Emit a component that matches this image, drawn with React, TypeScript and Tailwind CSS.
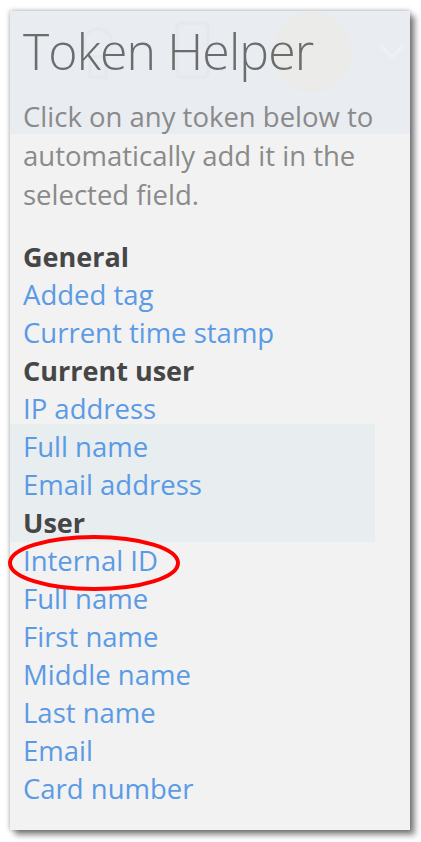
import React from "react";

const font = { fontFamily: '"Open Sans", "Noto Sans", sans-serif' };

function Link({ children }: { children: React.ReactNode }) {
  return <div className="h-[38px] leading-[38px] text-[27.5px] text-[#5b9ae4] whitespace-nowrap">{children}</div>;
}
function Head({ children }: { children: React.ReactNode }) {
  return <div className="h-[38px] leading-[38px] text-[27px] font-bold text-[#464646] whitespace-nowrap">{children}</div>;
}

export default function App() {
  return (
    <div className="w-[421px] h-[842px] bg-white pl-[10px] pt-[11px]" style={font}>
      <div className="relative w-[400px] h-[819px] bg-[linear-gradient(to_bottom,#e9edf1_123px,#f2f2f2_123px)] shadow-[0_0_5px_rgba(0,0,0,0.35),5px_5px_6px_rgba(0,0,0,0.45)]">
        {/* faint header ghost icons */}
        <svg className="absolute left-0 top-0" width="400" height="123" viewBox="0 0 400 123">
          <g opacity="0.4">
            <circle cx="302" cy="42" r="40" fill="#efe9df" />
            <rect x="167" y="12" width="31" height="54" rx="4" fill="none" stroke="#dfe4ea" strokeWidth="3" />
            <circle cx="88" cy="32" r="14" fill="none" stroke="#dfe4ea" strokeWidth="3" />
            <path d="M80 46 L80 66 L96 66 L96 46" fill="none" stroke="#dfe4ea" strokeWidth="3" />
            <path d="M371 35 L382 46 L393 35" fill="none" stroke="#f7f8fa" strokeWidth="3" />
          </g>
        </svg>
        <div className="relative px-[13px] pt-[8px]">
          <div className="text-[50px] font-light text-[#6c6c6c] leading-[64px] tracking-[-0.9px] whitespace-nowrap">Token Helper</div>
          <div className="mt-[14px] text-[27.5px] text-[#8a8a8a] leading-[39px] -mr-[4px]">
            Click on any token below to automatically add it in the selected field.
          </div>
          <div className="mt-[24px]">
            <Head>General</Head>
            <Link>Added tag</Link>
            <Link>Current time stamp</Link>
            <Head>Current user</Head>
            <Link>IP address</Link>
            <div className="-ml-[13px] pl-[13px] w-[365px] bg-[#e8edf0] -mt-[4px] pt-[4px]">
              <Link>Full name</Link>
              <Link>Email address</Link>
              <Head>User</Head>
            </div>
            <Link>Internal ID</Link>
            <Link>Full name</Link>
            <Link>First name</Link>
            <Link>Middle name</Link>
            <Link>Last name</Link>
            <Link>Email</Link>
            <Link>Card number</Link>
          </div>
          <svg className="absolute left-[-2px] top-[522px]" width="180" height="60" viewBox="0 0 180 60">
            <ellipse cx="86" cy="30" rx="84" ry="26" fill="none" stroke="#ff0000" strokeWidth="4" />
          </svg>
        </div>
      </div>
    </div>
  );
}
